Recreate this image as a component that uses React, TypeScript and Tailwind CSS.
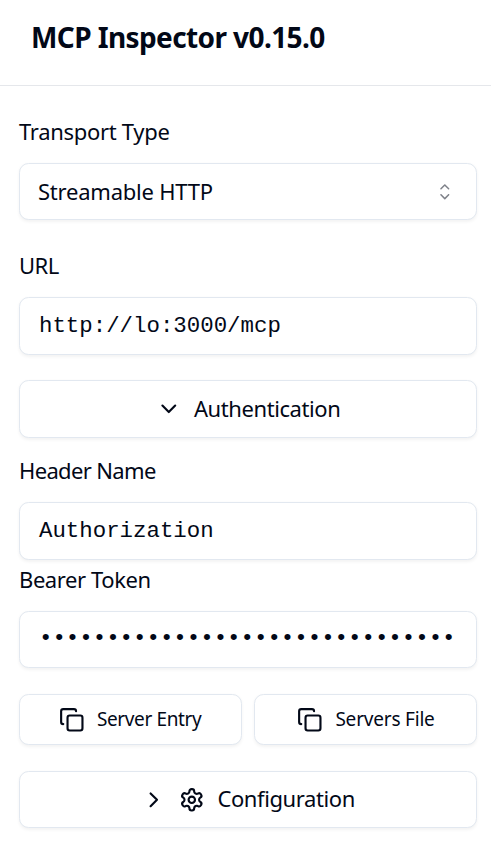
import type { ReactNode } from "react";
import { ChevronDown, ChevronRight, Copy } from "lucide-react";

const box = "flex shrink-0 items-center rounded-[9.6px] border border-[#e2e8f0] bg-white shadow-[0_1.6px_3.2px_rgba(0,0,0,0.05)]";

function Label({ children, className }: { children: ReactNode; className: string }) {
  return <label className={`block leading-[32px] whitespace-nowrap ${className}`}>{children}</label>;
}

function CaretSort() {
  return (
    <svg width="25.6" height="25.6" viewBox="0 0 15 15" fill="currentColor" className="opacity-50">
      <path
        fillRule="evenodd"
        d="M4.93179 5.43179C4.75605 5.60753 4.75605 5.89245 4.93179 6.06819C5.10753 6.24392 5.39245 6.24392 5.56819 6.06819L7.49999 4.13638L9.43179 6.06819C9.60753 6.24392 9.89245 6.24392 10.0682 6.06819C10.2439 5.89245 10.2439 5.60753 10.0682 5.43179L7.81819 3.18179C7.73379 3.0974 7.61933 3.04999 7.49999 3.04999C7.38064 3.04999 7.26618 3.0974 7.18179 3.18179L4.93179 5.43179ZM10.0682 9.56819C10.2439 9.39245 10.2439 9.10753 10.0682 8.93179C9.89245 8.75606 9.60753 8.75606 9.43179 8.93179L7.49999 10.8636L5.56819 8.93179C5.39245 8.75606 5.10753 8.75606 4.93179 8.93179C4.75605 9.10753 4.75605 9.39245 4.93179 9.56819L7.18179 11.8182C7.35753 11.9939 7.64245 11.9939 7.81819 11.8182L10.0682 9.56819Z"
      />
    </svg>
  );
}

function Gear() {
  return (
    <svg width="25.6" height="25.6" viewBox="0 0 24 24" fill="none" stroke="currentColor" strokeWidth="2" strokeLinecap="round" strokeLinejoin="round" className="shrink-0">
      <path d="M12.22 2h-.44a2 2 0 0 0-2 2v.18a2 2 0 0 1-1 1.73l-.43.25a2 2 0 0 1-2 0l-.15-.08a2 2 0 0 0-2.73.73l-.22.38a2 2 0 0 0 .73 2.73l.15.1a2 2 0 0 1 1 1.72v.51a2 2 0 0 1-1 1.74l-.15.09a2 2 0 0 0-.73 2.73l.22.38a2 2 0 0 0 2.73.73l.15-.08a2 2 0 0 1 2 0l.43.25a2 2 0 0 1 1 1.73V20a2 2 0 0 0 2 2h.44a2 2 0 0 0 2-2v-.18a2 2 0 0 1 1-1.73l.43-.25a2 2 0 0 1 2 0l.15.08a2 2 0 0 0 2.73-.73l.22-.39a2 2 0 0 0-.73-2.73l-.15-.08a2 2 0 0 1-1-1.74v-.5a2 2 0 0 1 1-1.74l.15-.09a2 2 0 0 0 .73-2.73l-.22-.38a2 2 0 0 0-2.73-.73l-.15.08a2 2 0 0 1-2 0l-.43-.25a2 2 0 0 1-1-1.73V4a2 2 0 0 0-2-2z" />
      <circle cx="12" cy="12" r="3" />
    </svg>
  );
}

export default function App() {
  return (
    <div className="flex h-[851px] w-[491px] flex-col overflow-hidden bg-white font-['Noto_Sans',sans-serif] text-[22.4px] text-[#020817]">
      <header className="flex h-[86px] shrink-0 items-start border-b border-[#e5e7eb] pt-[17px] pl-[31px]">
        <h1 className="text-[28px] leading-[40px] font-bold tracking-[-0.6px] whitespace-nowrap">MCP Inspector v0.15.0</h1>
      </header>

      <main className="flex flex-col pr-[14px] pl-[19px]">
        <Label className="mt-[29px] text-[22px] tracking-[-0.3px]">Transport Type</Label>
        <button className={`${box} mt-[16px] h-[57px] justify-between pr-[18px] pl-[18px]`}>
          <span className="text-[22px] tracking-[-0.22px]">Streamable HTTP</span>
          <CaretSort />
        </button>

        <Label className="mt-[29px] text-[22px] tracking-[-0.5px]">URL</Label>
        <div className={`${box} mt-[16px] h-[58px] pt-[2px] pl-[19px] font-['Liberation_Mono',monospace]`}>http://lo:3000/mcp</div>

        <button className={`${box} mt-[25px] h-[58px] pl-[136px]`}>
          <ChevronDown size={25.6} />
          <span className="ml-[12.4px] pb-[2px] text-[22px] tracking-[-0.42px]">Authentication</span>
        </button>

        <Label className="mt-[16px] text-[22px] tracking-[-0.65px]">Header Name</Label>
        <div className={`${box} mt-[16px] h-[58px] pt-[2px] pl-[19px] font-['Liberation_Mono',monospace]`}>Authorization</div>

        <Label className="mt-[3px] text-[22px] tracking-[-0.42px]">Bearer Token</Label>
        <div className={`${box} mt-[16px] h-[57px] pb-px pl-[19px] font-['Liberation_Mono',monospace]`}>{"•".repeat(31)}</div>

        <div className="mt-[26px] grid grid-cols-2 gap-3">
          <button className={`${box} h-[51px] pl-[39px] text-[19px]`}>
            <Copy size={25.6} />
            <span className="ml-[12.4px] tracking-[-0.38px] whitespace-nowrap">Server Entry</span>
          </button>
          <button className={`${box} h-[51px] pl-[42px] text-[19px]`}>
            <Copy size={25.6} />
            <span className="ml-[12.8px] tracking-[-0.2px] whitespace-nowrap">Servers File</span>
          </button>
        </div>

        <button className={`${box} mt-[26px] h-[57px] pl-[121px]`}>
          <ChevronRight size={25.6} />
          <span className="ml-[12.8px] flex">
            <Gear />
          </span>
          <span className="ml-[12.4px] pb-[2px] text-[22px] tracking-[-0.4px]">Configuration</span>
        </button>
      </main>
    </div>
  );
}
